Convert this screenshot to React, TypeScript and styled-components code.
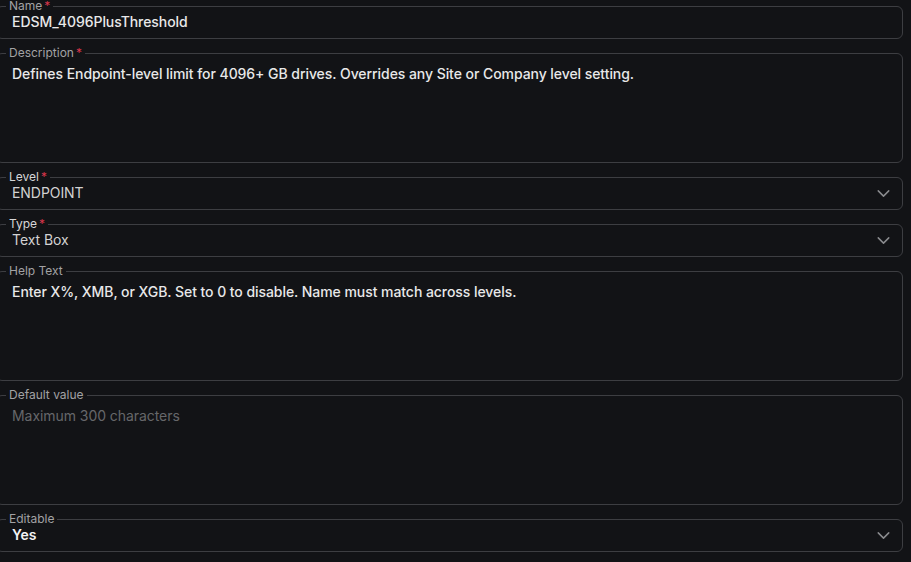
import { createGlobalStyle } from 'styled-components'
import styled from 'styled-components'
import { ChevronDown } from 'lucide-react'

const GlobalStyle = createGlobalStyle`
    html, body {
        margin: 0;
        padding: 0;
        background: #121316;
        overflow: hidden;
    }
    body {
        font-family: Inter, "Noto Sans", "Liberation Sans", sans-serif;
    }
`

type FieldProps = {
    label: string
    required?: boolean
    bright?: boolean
    children: React.ReactNode
}

function Field({ label, required, bright, children }: FieldProps){
    return (
        <Outline>
            <Legend $bright={bright}>
                {label}
                {required && <Required>*</Required>}
            </Legend>
            {children}
        </Outline>
    )
}

export default function App(){
    return (
        <>
            <GlobalStyle />
            <Form>
                <Field label="Name" required>
                    <SingleRow>
                        <Value $weight={500}>EDSM_4096PlusThreshold</Value>
                    </SingleRow>
                </Field>

                <Field label="Description" required>
                    <MultiRow>
                        <Value $weight={500}>
                            Defines Endpoint-level limit for 4096+ GB drives. Overrides any Site or Company level setting.
                        </Value>
                    </MultiRow>
                </Field>

                <Field label="Level" required bright>
                    <SingleRow>
                        <Value $color="#d2d2d2">ENDPOINT</Value>
                        <Chevron size={21} strokeWidth={1.7} />
                    </SingleRow>
                </Field>

                <Field label="Type" required bright>
                    <SingleRow>
                        <Value $color="#d2d2d2">Text Box</Value>
                        <Chevron size={21} strokeWidth={1.7} />
                    </SingleRow>
                </Field>

                <Field label="Help Text">
                    <MultiRow>
                        <Value $weight={500}>
                            Enter X%, XMB, or XGB. Set to 0 to disable. Name must match across levels.
                        </Value>
                    </MultiRow>
                </Field>

                <Field label="Default value">
                    <MultiRow>
                        <Value $color="#66676a">Maximum 300 characters</Value>
                    </MultiRow>
                </Field>

                <Field label="Editable">
                    <SingleRow>
                        <Value $weight={600} $color="#f4f4f4">Yes</Value>
                        <Chevron size={21} strokeWidth={1.7} />
                    </SingleRow>
                </Field>
            </Form>
        </>
    )
}

const Form = styled.div`
    display: flex;
    flex-direction: column;
    gap: 8px;
    width: 907px;
    margin-left: -4px;
`

const Outline = styled.fieldset`
    margin: 0;
    padding: 0;
    min-width: 0;
    border: 1px solid #3d3e42;
    border-radius: 6px;
`

const Legend = styled.legend<{ $bright?: boolean }>`
    margin-left: 9px;
    padding: 0 3px;
    font-size: 12px;
    line-height: 12px;
    color: ${p => p.$bright ? '#d6d6d8' : '#a2a2a4'};
`

const Required = styled.span`
    margin-left: 2px;
    color: #d8364b;
`

const SingleRow = styled.div`
    box-sizing: border-box;
    height: 26px;
    padding: 0 8px 0 15px;
    display: flex;
    align-items: flex-start;
    justify-content: space-between;
`

const MultiRow = styled.div`
    box-sizing: border-box;
    height: 103px;
    padding: 5px 15px 0 15px;
`

const Value = styled.div<{ $weight?: number, $color?: string }>`
    font-size: 14px;
    line-height: 20px;
    letter-spacing: -0.06px;
    font-weight: ${p => p.$weight ?? 400};
    color: ${p => p.$color ?? '#e8e8e9'};
    white-space: nowrap;
`

const Chevron = styled(ChevronDown)`
    color: #8a8b8e;
    flex-shrink: 0;
`
